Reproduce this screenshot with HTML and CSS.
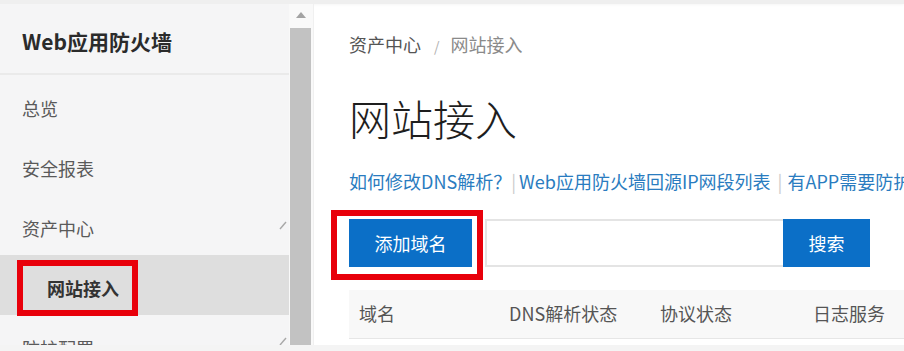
FILE: index.html
```html
<!DOCTYPE html>
<html lang="zh-CN">
<head>
<meta charset="utf-8">
<title>网站接入</title>
<link rel="stylesheet" href="styles.css">
</head>
<body>
<div class="topbar"></div>
<div class="frame">
  <aside class="sidebar">
    <div class="side-title">Web应用防火墙</div>
    <nav class="nav">
      <div class="nav-item">总览</div>
      <div class="nav-item">安全报表</div>
      <div class="nav-item">资产中心<svg class="chev chev-a" width="8" height="9" viewBox="0 0 8 9"><path d="M1 8 L7 1" stroke="#a8a8a8" stroke-width="1.4" fill="none"/></svg></div>
      <div class="nav-item active"><span class="sub">网站接入</span><span class="annot annot-side"></span></div>
      <div class="nav-item">防护配置<svg class="chev chev-b" width="8" height="11" viewBox="0 0 8 11"><path d="M1 10 L7 3" stroke="#a8a8a8" stroke-width="1.4" fill="none"/></svg></div>
    </nav>
  </aside>
  <div class="vscroll">
    <svg class="arrow" width="10" height="6" viewBox="0 0 10 6"><path d="M0 6 L5 0 L10 6 Z" fill="#a3a3a3"/></svg>
    <div class="thumb"></div>
  </div>
  <main class="main">
    <div class="crumbs"><span class="crumb-link">资产中心</span><span class="crumb-sep">/</span><span class="crumb-cur">网站接入</span></div>
    <h1 class="page-title">网站接入</h1>
    <div class="links"><a class="link">如何修改DNS解析？</a><span class="bar bar-1">|</span><a class="link">Web应用防火墙回源IP网段列表</a><span class="bar bar-2">|</span><a class="link">有APP需要防护？</a></div>
    <div class="toolbar">
      <div class="btn-wrap"><button class="btn btn-add">添加域名</button><span class="annot annot-btn"></span></div>
      <input class="search-input" type="text">
      <button class="btn btn-search">搜索</button>
    </div>
    <div class="thead">
      <div class="th">域名</div>
      <div class="th">DNS解析状态</div>
      <div class="th">协议状态</div>
      <div class="th">日志服务</div>
    </div>
  </main>
</div>
<div class="bottombar"></div>
</body>
</html>
```
FILE: styles.css
```css
html, body {
  margin: 0;
  padding: 0;
  height: 351px;
  overflow: hidden;
  background: #ffffff;
  font-family: "Noto Sans CJK SC", "Noto Sans", sans-serif;
}

.topbar {
  height: 4px;
  background: #efefef;
  box-shadow: 0 1px 3px rgba(0, 0, 0, 0.04);
}

.frame {
  display: flex;
  height: 341px;
}

.bottombar {
  height: 6px;
  background: #f4f4f4;
}

/* sidebar */
.sidebar {
  width: 289px;
  flex: none;
  background: #f5f5f6;
  overflow: hidden;
}

.side-title {
  box-sizing: border-box;
  height: 71px;
  padding: 6px 0 0 22px;
  line-height: 63px;
  font-size: 21px;
  font-weight: 700;
  color: #2b2b2b;
  border-bottom: 2px solid #eaeaea;
}

.nav-item {
  position: relative;
  box-sizing: border-box;
  height: 60px;
  padding: 6px 0 0 22px;
  line-height: 54px;
  font-size: 18px;
  color: #5a5a5a;
  display: flex;
  white-space: nowrap;
}

.nav-item.active {
  background: #dedede;
  color: #333;
  font-weight: 700;
}

.nav-item .sub {
  padding-left: 25px;
}

.chev {
  margin-left: auto;
  margin-right: 2px;
}

.chev-a { margin-top: 20px; }
.chev-b { margin-top: 14px; }

.annot {
  position: absolute;
  border: 6px solid #e8000b;
  box-sizing: border-box;
  pointer-events: none;
}

.annot-side {
  left: 17px;
  top: 5px;
  width: 121px;
  height: 56px;
}

/* scrollbar */
.vscroll {
  width: 24px;
  flex: none;
  background: #f9f9f9;
  border-right: 1px solid #f0f0f0;
  display: flex;
  flex-direction: column;
  align-items: center;
}

.arrow {
  margin-top: 8px;
  margin-left: -1px;
}

.thumb {
  margin-top: 10px;
  width: 21px;
  margin-left: -2px;
  flex: 1;
  background: #c2c2c2;
}

/* main */
.main {
  flex: 1;
  min-width: 0;
  padding: 28px 0 0 35px;
  overflow: hidden;
  white-space: nowrap;
}

.crumbs {
  height: 24px;
  line-height: 24px;
  font-size: 18px;
}

.crumb-link { color: #555; }
.crumb-sep { color: #b0b0b0; font-size: 14px; margin: 0 11px 0 13px; }
.crumb-cur { color: #8a8a8a; }

.page-title {
  margin: 37px 0 0;
  height: 50px;
  line-height: 50px;
  font-size: 42px;
  font-weight: 300;
  color: #1e1e1e;
}

.links {
  margin-top: 26px;
  height: 24px;
  line-height: 24px;
  font-size: 18px;
}

.link {
  color: #2a7cc0;
  text-decoration: none;
}

.bar {
  color: #cccccc;
}

.bar-1 { margin: 0 3px 0 0; }
.bar-2 { margin: 0 5px 0 7px; }

.toolbar {
  margin-top: 26px;
  display: flex;
  align-items: stretch;
  height: 48px;
}

.btn-wrap {
  position: relative;
  display: flex;
}

.btn {
  border: none;
  margin: 0;
  background: #0b6fc7;
  color: #ffffff;
  font-family: inherit;
  font-size: 18px;
  padding: 0;
}

.btn-add { width: 123px; }

.annot-btn {
  left: -18px;
  top: -9px;
  right: -11px;
  bottom: -13px;
}

.search-input {
  margin-left: 13px;
  width: 298px;
  box-sizing: border-box;
  border: 2px solid #e4e4e4;
  border-right: none;
  padding: 0;
  outline: none;
}

.btn-search { width: 87px; }

.thead {
  margin-top: 23px;
  display: grid;
  grid-template-columns: 150px 151px 153px 1fr;
  height: 48px;
  line-height: 47px;
  background: #f8f8f8;
  border-bottom: 1px solid #e6e6e6;
}

.th {
  padding-left: 10px;
  font-size: 18px;
  color: #555;
}
```
